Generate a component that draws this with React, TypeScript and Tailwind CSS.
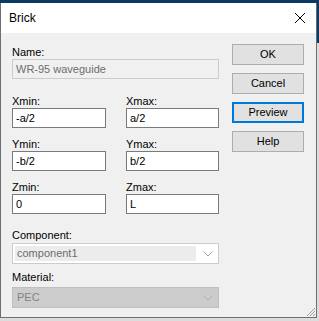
import React from 'react';

const font = { fontFamily: '"Liberation Sans", Arial, sans-serif' };

const Label: React.FC<{ text: string; className?: string }> = ({ text, className = '' }) => (
  <div className={`h-[13px] leading-[13px] text-[11px] text-black ${className}`}>{text}</div>
);

const Field: React.FC<{ value: string }> = ({ value }) => (
  <div className="h-[20px] border border-[#7a7a7a] bg-white px-[3px] text-[11px] leading-[18px] text-black">
    {value}
  </div>
);

const Chevron: React.FC<{ color: string }> = ({ color }) => (
  <svg width="10" height="6" viewBox="0 0 10 6" className="shrink-0">
    <path d="M0.5 0.5 L5 5 L9.5 0.5" fill="none" stroke={color} strokeWidth="1" />
  </svg>
);

const Btn: React.FC<{ text: string; focused?: boolean }> = ({ text, focused }) => (
  <button
    className={`h-[21px] w-[72px] bg-[#e1e1e1] text-[11px] text-black ${
      focused ? 'border-2 border-[#0078d7]' : 'border border-[#adadad]'
    }`}
  >
    {text}
  </button>
);

export default function App() {
  return (
    <div className="h-[321px] w-[319px] overflow-hidden bg-[#dcdcdc]" style={font}>
      <div className="h-[3px] bg-[#0b3b62]" />
      <div className="flex">
        <div className="flex h-[315px] w-[317px] flex-col border-x border-b border-[#6e6e6e] bg-[#f0f0f0]">
          {/* title bar */}
          <div className="flex h-[30px] items-center justify-between bg-white pl-[8px] pr-[9px]">
            <span className="text-[12px] text-black">Brick</span>
            <svg width="10" height="10" viewBox="0 0 10 10" className="mr-[2px]">
              <path d="M0 0 L10 10 M10 0 L0 10" stroke="#000" strokeWidth="1" />
            </svg>
          </div>

          {/* body */}
          <div className="relative flex flex-1 pl-[11px]">
            <div className="w-[207px] pt-[13px]">
              <Label text="Name:" />
              <div className="h-[20px] border border-[#cccccc] bg-[#f0f0f0] px-[3px] text-[11px] leading-[18px] text-[#6d6d6d]">
                WR-95 waveguide
              </div>

              <div className="mt-[16px] grid grid-cols-[94px_93px] gap-x-[20px] gap-y-[10px]">
                <div>
                  <Label text="Xmin:" />
                  <Field value="-a/2" />
                </div>
                <div>
                  <Label text="Xmax:" />
                  <Field value="a/2" />
                </div>
                <div>
                  <Label text="Ymin:" />
                  <Field value="-b/2" />
                </div>
                <div>
                  <Label text="Ymax:" />
                  <Field value="b/2" />
                </div>
                <div>
                  <Label text="Zmin:" />
                  <Field value="0" />
                </div>
                <div>
                  <Label text="Zmax:" />
                  <Field value="L" />
                </div>
              </div>

              <Label text="Component:" className="mt-[15px]" />
              <div className="mt-[1px] flex h-[21px] items-center border border-[#cccccc] bg-white pl-[2px] pr-[5px]">
                <div className="flex h-[15px] flex-1 items-center bg-[#ececec] px-[2px] text-[11px] text-[#6d6d6d]">
                  component1
                </div>
                <div className="flex w-[17px] justify-end">
                  <Chevron color="#a0a0a0" />
                </div>
              </div>

              <Label text="Material:" className="mt-[7px]" />
              <div className="mt-[3px] flex h-[21px] items-center justify-between border border-[#bfbfbf] bg-[#cccccc] pl-[4px] pr-[5px]">
                <span className="text-[11px] text-[#838383]">PEC</span>
                <Chevron color="#b0b0b0" />
              </div>
            </div>

            <div className="ml-[13px] flex flex-col gap-[8px] pt-[11px]">
              <Btn text="OK" />
              <Btn text="Cancel" />
              <Btn text="Preview" focused />
              <Btn text="Help" />
            </div>

            {/* resize grip */}
            <svg width="11" height="11" viewBox="0 0 11 11" className="absolute bottom-0 right-0">
              <path d="M10 2 L2 10 M10 5 L5 10 M10 8 L8 10" stroke="#a0a0a0" strokeWidth="1" />
            </svg>
          </div>
        </div>
        <div className="h-[40px] w-[2px] bg-[#0b3b62]" />
      </div>
    </div>
  );
}
